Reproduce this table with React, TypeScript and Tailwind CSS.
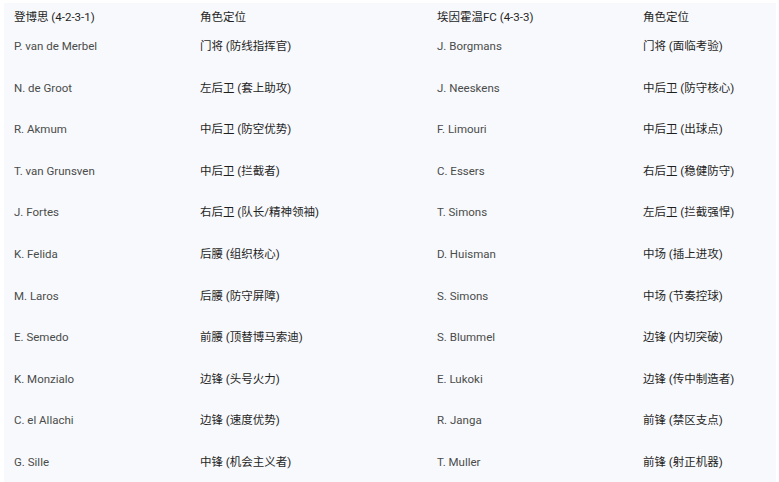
const rows: [string, string, string, string][] = [
  ['P. van de Merbel', '门将 (防线指挥官)', 'J. Borgmans', '门将 (面临考验)'],
  ['N. de Groot', '左后卫 (套上助攻)', 'J. Neeskens', '中后卫 (防守核心)'],
  ['R. Akmum', '中后卫 (防空优势)', 'F. Limouri', '中后卫 (出球点)'],
  ['T. van Grunsven', '中后卫 (拦截者)', 'C. Essers', '右后卫 (稳健防守)'],
  ['J. Fortes', '右后卫 (队长/精神领袖)', 'T. Simons', '左后卫 (拦截强悍)'],
  ['K. Felida', '后腰 (组织核心)', 'D. Huisman', '中场 (插上进攻)'],
  ['M. Laros', '后腰 (防守屏障)', 'S. Simons', '中场 (节奏控球)'],
  ['E. Semedo', '前腰 (顶替博马索迪)', 'S. Blummel', '边锋 (内切突破)'],
  ['K. Monzialo', '边锋 (头号火力)', 'E. Lukoki', '边锋 (传中制造者)'],
  ['C. el Allachi', '边锋 (速度优势)', 'R. Janga', '前锋 (禁区支点)'],
  ['G. Sille', '中锋 (机会主义者)', 'T. Muller', '前锋 (射正机器)'],
];

const cols = 'grid grid-cols-[186px_237px_206px_1fr] pl-[10px]';

export default function App() {
  return (
    <div className="min-h-screen bg-white pl-[4px] pt-[3px] pr-[3px] font-['Roboto','Noto_Sans_CJK_SC',sans-serif] text-[11.5px] leading-[16px]">
      <div className="bg-[#f8f9fc] pb-4">
        <div className={`${cols} h-[29px] pt-[6px] text-[#1f1f1f]`}>
          <div>登博思 (4-2-3-1)</div>
          <div>角色定位</div>
          <div>埃因霍温FC (4-3-3)</div>
          <div>角色定位</div>
        </div>
        {rows.map((r) => (
          <div key={r[0]} className={`${cols} h-[41.6px] pt-[6px] text-[#4a4c4b]`}>
            <div>{r[0]}</div>
            <div className="text-[#1f1f1f]">{r[1]}</div>
            <div>{r[2]}</div>
            <div className="text-[#1f1f1f]">{r[3]}</div>
          </div>
        ))}
      </div>
    </div>
  );
}
